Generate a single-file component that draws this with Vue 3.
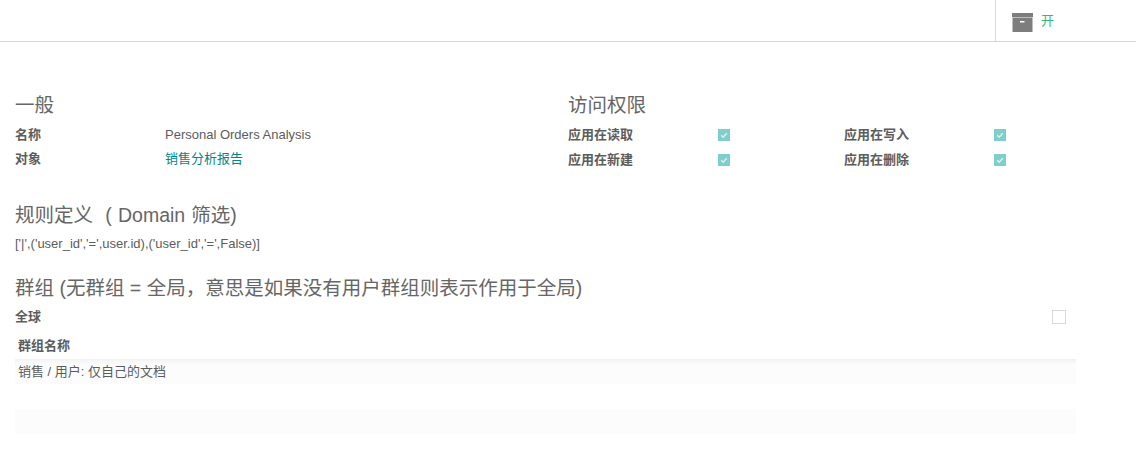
<template>
  <div class="page">
    <div class="button-box">
      <div class="stat-button">
        <svg class="archive-icon" viewBox="0 0 21 19" width="21" height="19">
          <path d="M0 0h21v4H0z" fill="#7d7d7d" />
          <path fill-rule="evenodd" d="M.5 4.5h20V19H.5zM8 8v1.5h4.5V8z" fill="#7d7d7d" />
        </svg>
        <span class="stat-text">开</span>
      </div>
    </div>

    <div class="sheet">
      <div class="top-groups">
        <div class="group-left">
          <h2 class="title left-title">一般</h2>
          <div class="field-row">
            <label class="field-label">名称</label>
            <span>Personal Orders Analysis</span>
          </div>
          <div class="field-row">
            <label class="field-label">对象</label>
            <a class="link">销售分析报告</a>
          </div>
        </div>
        <div class="group-right">
          <h2 class="title right-title">访问权限</h2>
          <div class="perm-grid">
            <div v-for="p in perms" :key="p" class="perm">
              <label class="field-label">{{ p }}</label>
              <span class="check">
                <svg viewBox="0 0 12 12" width="12" height="12">
                  <path d="M3.2 6.2l2 2 3.6-4" fill="none" stroke="#fff" stroke-width="1.6" opacity="0.7" />
                </svg>
              </span>
            </div>
          </div>
        </div>
      </div>

      <h2 class="title domain-title">规则定义&nbsp; ( Domain 筛选)</h2>
      <div class="domain">['|',('user_id','=',user.id),('user_id','=',False)]</div>

      <h2 class="title groups-title">群组 (无群组 = 全局，意思是如果没有用户群组则表示作用于全局)</h2>
      <div class="global-row">
        <label class="field-label">全球</label>
        <span class="empty-check"></span>
      </div>

      <table class="group-table">
        <thead>
          <tr><th>群组名称</th></tr>
        </thead>
        <tbody>
          <tr class="odd"><td>销售 / 用户: 仅自己的文档</td></tr>
          <tr><td></td></tr>
          <tr class="odd"><td></td></tr>
        </tbody>
      </table>
    </div>
  </div>
</template>

<script setup>
const perms = ['应用在读取', '应用在写入', '应用在新建', '应用在删除']
</script>

<style>
html, body {
  background: #fff;
}
</style>

<style scoped>
.page {
  font-family: "Liberation Sans", "Noto Sans CJK SC", sans-serif;
  font-size: 13px;
  line-height: 18px;
  color: #5c5c5c;
}

.button-box {
  height: 41px;
  border-bottom: 1px solid #d9d7d7;
  display: flex;
  justify-content: flex-end;
}

.stat-button {
  width: 140px;
  margin-right: 1px;
  border-left: 1px solid #d9d7d7;
  display: flex;
  align-items: center;
  padding-left: 16px;
  box-sizing: border-box;
}

.archive-icon {
  margin-top: 4px;
}

.stat-text {
  margin-left: 8px;
  font-size: 13px;
  color: #35b877;
}

.sheet {
  width: 1061px;
  margin-left: 15px;
}

.top-groups {
  display: flex;
  padding-top: 51px;
}

.group-left {
  width: 553px;
}

.group-right {
  flex: 1;
}

.title {
  margin: 0;
  font-size: 19.5px;
  font-weight: 400;
  line-height: 24px;
  color: #666;
}

.left-title {
  margin-bottom: 6px;
}

.right-title {
  margin-bottom: 5px;
}

.field-row {
  display: flex;
  height: 24px;
  align-items: center;
}

.field-label {
  font-weight: 700;
  width: 150px;
  flex-shrink: 0;
}

.link {
  color: #00878a;
}

.perm-grid {
  display: grid;
  grid-template-columns: 276px 1fr;
}

.perm {
  display: flex;
  height: 25px;
  align-items: center;
}

.check {
  display: flex;
  width: 12px;
  height: 12px;
  background: #7ececb;
}

.domain-title {
  margin-top: 31px;
  word-spacing: 0.75px;
}

.domain {
  margin-top: 8px;
}

.groups-title {
  margin-top: 23px;
}

.global-row {
  display: flex;
  justify-content: space-between;
  align-items: center;
  height: 24px;
  margin-top: 5px;
  padding-right: 10px;
}

.empty-check {
  width: 12px;
  height: 12px;
  border: 1px solid #d9d9d9;
}

.group-table {
  width: 100%;
  border-collapse: collapse;
  margin-top: 4px;
}

th {
  text-align: left;
  padding: 4px 3px;
  height: 25px;
  box-sizing: border-box;
  font-weight: 700;
}

td {
  padding: 0 3px;
  height: 25px;
  box-sizing: border-box;
}

tbody tr:first-child td {
  box-shadow: inset 0 7px 6px -6px rgba(0, 0, 0, 0.07);
}

.odd {
  background: #fcfcfc;
}
</style>
